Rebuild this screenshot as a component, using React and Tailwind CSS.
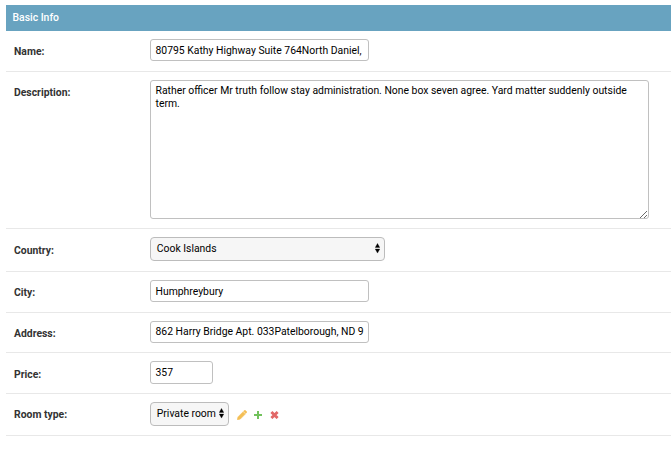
import React from "react";

function Row({ label, height, labelTop = "pt-[13px]", children }) {
  return (
    <div className={`flex border-b border-[#e8e8e8] pl-2 pt-2 ${height}`}>
      <div className="w-[136px] shrink-0">
        <div className={`-mt-2 text-[10.4px] leading-[15px] font-bold text-[#333] ${labelTop}`}>{label}</div>
      </div>
      {children}
    </div>
  );
}

function TextField({ value, size, leading = "leading-[21px]" }) {
  return (
    <div className={`overflow-hidden rounded-[3px] border border-[#c0c0c0] bg-white pl-[4.5px] text-[10.4px] whitespace-nowrap text-black ${leading} ${size}`}>
      {value}
    </div>
  );
}

function SelectField({ value, size }) {
  return (
    <div className={`flex h-6 justify-between rounded-[4px] border border-[#bcbcbc] bg-[#f6f6f6] pl-[5.8px] pr-1 text-[10.4px] leading-[21px] whitespace-nowrap text-black ${size}`}>
      <span>{value}</span>
      <svg className="mt-[5px] h-[11px] w-[5px] shrink-0" viewBox="0 0 5 11">
        <path d="M2.5 .4 4.8 4.5H.2ZM2.5 10.1.2 6h4.6Z" fill="#000" stroke="#000" strokeWidth=".3" />
      </svg>
    </div>
  );
}

export default function App() {
  return (
    <div className="h-[451px] w-[671px] overflow-hidden bg-white pl-1.5 pt-[5px] font-['Roboto',sans-serif]">
      <h2 className="h-[26px] bg-[#68a3c0] pl-[6.5px] text-[10.4px] leading-[25px] font-medium text-white">Basic Info</h2>
      <Row label="Name:" height="h-[41px]">
        <TextField value="80795 Kathy Highway Suite 764North Daniel," size="h-[22px] w-[219px]" />
      </Row>
      <Row label="Description:" height="h-[157px]">
        <div className="relative h-[139px] w-[499px] rounded-[3px] border border-[#c0c0c0] pl-[4.5px] pt-[3px] text-[10.4px] leading-[13px] text-black">
          Rather officer Mr truth follow stay administration. None box seven agree. Yard matter suddenly outside
          <br />
          term.
          <svg className="absolute right-px bottom-0 h-[7px] w-[7px]" viewBox="0 0 7 7">
            <path d="M0 7 7 0M4 7 7 4" stroke="#444" strokeWidth=".8" />
          </svg>
        </div>
      </Row>
      <Row label="Country:" height="h-[43px]" labelTop="pt-[14px]">
        <SelectField value="Cook Islands" size="w-[235px]" />
      </Row>
      <Row label="City:" height="h-[41px]">
        <TextField value="Humphreybury" size="h-[22px] w-[219px]" />
      </Row>
      <Row label="Address:" height="h-[40px]">
        <TextField value="862 Harry Bridge Apt. 033Patelborough, ND 9" size="h-[22px] w-[219px]" leading="leading-[19px]" />
      </Row>
      <Row label="Price:" height="h-[41px]" labelTop="pt-[14px]">
        <TextField value="357" size="h-[23px] w-[63px]" />
      </Row>
      <Row label="Room type:" height="h-[42px]">
        <SelectField value="Private room" size="w-[79px]" />
        <div className="ml-[8px] mt-[8px] flex gap-[7px]">
          <svg className="h-[10px] w-[10px]" viewBox="0 0 9 9">
            <path d="M.3 8.8.9 6.2 5.4 1.7 7.4 3.7 2.9 8.2ZM5.9 1.2 6.7.4Q7.1 0 7.5.4L8.7 1.6Q9 2 8.6 2.4L7.9 3.1Z" fill="#f4bf56" stroke="#f4bf56" strokeWidth=".6" />
          </svg>
          <svg className="h-[9px] w-[9px]" viewBox="0 0 9 9">
            <path d="M4 1v8M0 5h8" stroke="#72c25c" strokeWidth="2" />
          </svg>
          <svg className="h-[9px] w-[9px]" viewBox="0 0 9 9">
            <path d="M1.4 1.9l6.2 6.2M7.6 1.9l-6.2 6.2" stroke="#e26868" strokeWidth="2.8" />
          </svg>
        </div>
      </Row>
    </div>
  );
}
